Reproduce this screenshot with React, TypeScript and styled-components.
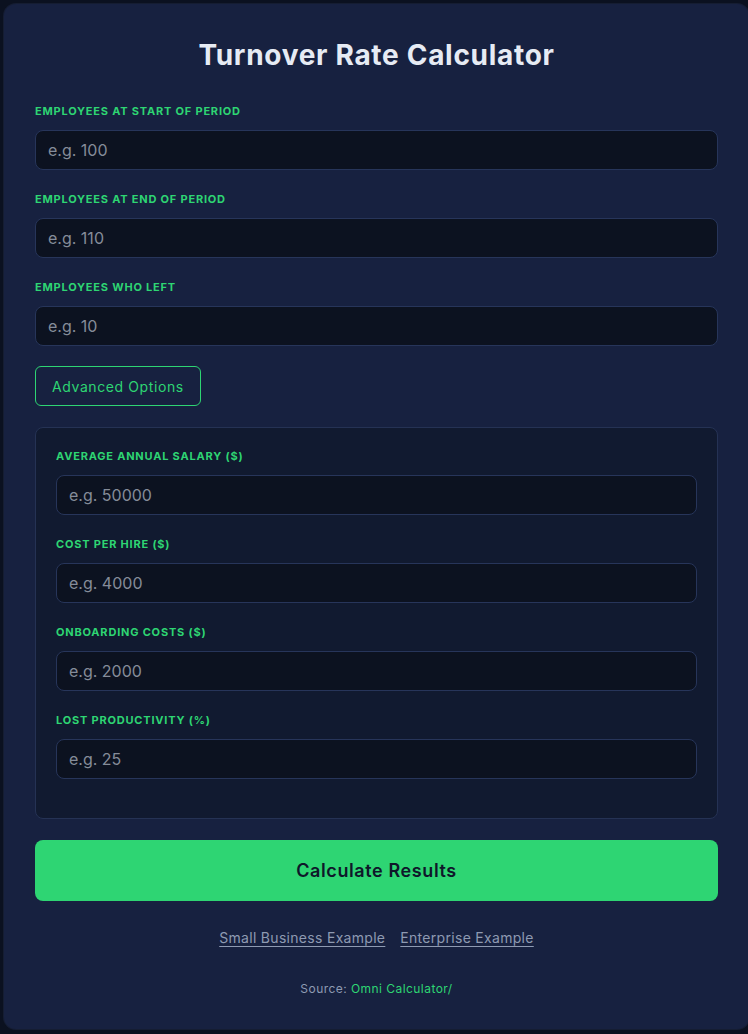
import React from "react";
import styled, { createGlobalStyle } from "styled-components";

const GlobalStyle = createGlobalStyle`
  html, body {
    margin: 0;
    padding: 0;
    background: #0b1120;
    overflow: hidden;
  }
  body {
    font-family: "Inter", "Noto Sans", sans-serif;
  }
  * { box-sizing: border-box; }
`;

const Page = styled.div`
  padding: 4px 0 6px 4px;
`;

const Card = styled.main`
  width: 745px;
  background: #172140;
  border-radius: 12px;
  padding: 34px 31px 31px 31px;
  box-shadow: 0 0 0 1px rgba(40, 52, 86, 0.35);
`;

const Title = styled.h1`
  margin: 0 0 31px 0;
  text-align: center;
  color: #e6ebf4;
  font-size: 28px;
  line-height: 34px;
  font-weight: 700;
  letter-spacing: 0.7px;
`;

const Field = styled.div`
  margin-bottom: 21px;
`;

const Label = styled.label`
  display: block;
  color: #2ed573;
  font-size: 11px;
  line-height: 16px;
  font-weight: 700;
  letter-spacing: 0.8px;
  text-transform: uppercase;
  margin-bottom: 11px;
`;

const Input = styled.input`
  display: block;
  width: 100%;
  height: 40px;
  background: #0c1220;
  border: 1px solid #27355a;
  border-radius: 8px;
  padding: 0 12px;
  color: #e6ebf4;
  font-family: inherit;
  font-size: 16px;
  outline: none;
  &::placeholder {
    color: #858c99;
  }
`;

const ToggleButton = styled.button`
  display: block;
  height: 40px;
  padding: 0 16px;
  margin-top: -1px;
  background: transparent;
  border: 1px solid #2ed573;
  border-radius: 6px;
  color: #2ed573;
  font-family: inherit;
  font-size: 14px;
  letter-spacing: 0.6px;
  cursor: pointer;
`;

const Panel = styled.section`
  margin-top: 21px;
  background: #111a30;
  border: 1px solid #253254;
  border-radius: 8px;
  padding: 20px 20px 18px 20px;
`;

const CalcButton = styled.button`
  display: block;
  width: 100%;
  height: 61px;
  margin-top: 21px;
  background: #2ed573;
  border: none;
  border-radius: 8px;
  color: #0f172a;
  font-family: inherit;
  font-size: 18px;
  font-weight: 600;
  letter-spacing: 0.6px;
  cursor: pointer;
`;

const Links = styled.div`
  display: flex;
  justify-content: center;
  gap: 15px;
  margin-top: 26px;
  line-height: 21px;
`;

const ExampleLink = styled.a`
  color: #8e9ab2;
  font-size: 14px;
  letter-spacing: 0.3px;
  text-decoration: underline;
  text-underline-offset: 3px;
  cursor: pointer;
`;

const Source = styled.p`
  margin: 32px 0 0 0;
  text-align: center;
  color: #8e9ab2;
  font-size: 12px;
  line-height: 18px;
  letter-spacing: 0.45px;
`;

const SourceLink = styled.a`
  color: #2ed573;
  text-decoration: none;
`;

type FieldDef = { label: string; placeholder: string };

const mainFields: FieldDef[] = [
  { label: "Employees at Start of Period", placeholder: "e.g. 100" },
  { label: "Employees at End of Period", placeholder: "e.g. 110" },
  { label: "Employees Who Left", placeholder: "e.g. 10" },
];

const advancedFields: FieldDef[] = [
  { label: "Average Annual Salary ($)", placeholder: "e.g. 50000" },
  { label: "Cost per Hire ($)", placeholder: "e.g. 4000" },
  { label: "Onboarding Costs ($)", placeholder: "e.g. 2000" },
  { label: "Lost Productivity (%)", placeholder: "e.g. 25" },
];

function FormField({ label, placeholder }: FieldDef) {
  const id = label.replace(/\W+/g, "-").toLowerCase();
  return (
    <Field>
      <Label htmlFor={id}>{label}</Label>
      <Input id={id} type="number" placeholder={placeholder} />
    </Field>
  );
}

export default function App() {
  return (
    <>
      <GlobalStyle />
      <Page>
        <Card>
          <Title>Turnover Rate Calculator</Title>
          {mainFields.map((f) => (
            <FormField key={f.label} {...f} />
          ))}
          <ToggleButton type="button">Advanced Options</ToggleButton>
          <Panel>
            {advancedFields.map((f) => (
              <FormField key={f.label} {...f} />
            ))}
          </Panel>
          <CalcButton type="button">Calculate Results</CalcButton>
          <Links>
            <ExampleLink>Small Business Example</ExampleLink>
            <ExampleLink>Enterprise Example</ExampleLink>
          </Links>
          <Source>
            Source: <SourceLink>Omni Calculator/</SourceLink>
          </Source>
        </Card>
      </Page>
    </>
  );
}
